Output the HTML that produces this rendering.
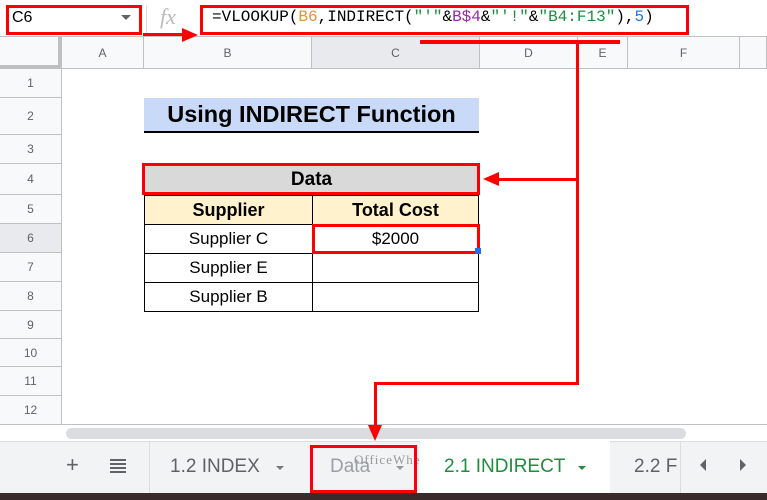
<!DOCTYPE html>
<html><head><style>
*{margin:0;padding:0;box-sizing:border-box}
body{width:767px;height:500px;overflow:hidden;background:#fff;font-family:"Liberation Sans",Arial,sans-serif;position:relative}
.a{position:absolute}
.hdr{background:#f8f9fa;color:#5f6368;font-size:12px;display:flex;align-items:center;justify-content:center;border-right:1px solid #c0c0c0;border-bottom:1px solid #c0c0c0}
.cell{position:absolute;display:flex;align-items:center;justify-content:center;font-size:17px;color:#000;border:1px solid #000}
.red{position:absolute;border:3px solid #f00}
.rl{position:absolute;background:#f00}
</style></head><body>
<div class="a" style="left:0;top:0;width:767px;height:37px;background:#fff;border-bottom:1px solid #c0c0c0"></div>
<div class="a" style="left:12px;top:9px;font-size:16px">C6</div>
<div class="a" style="left:121px;top:15px;width:0;height:0;border-left:5px solid transparent;border-right:5px solid transparent;border-top:5px solid #5f6368"></div>
<div class="a" style="left:146px;top:5px;width:1px;height:28px;background:#ddd"></div>
<div class="a" style="left:160px;top:4px;font-family:'Liberation Serif',serif;font-style:italic;font-size:22px;color:#bbb">fx</div>
<div class="a" style="left:212px;top:8px;font-family:'Liberation Mono',monospace;font-size:16px;letter-spacing:0px;color:#000;white-space:pre">=VLOOKUP(<span style="color:#e69138">B6</span>,INDIRECT(<span style="color:#1e8e3e">"'"</span>&amp;<span style="color:#9c27b0">B$4</span>&amp;<span style="color:#1e8e3e">"'!"</span>&amp;<span style="color:#1e8e3e">"B4:F13"</span>),<span style="color:#1a73e8">5</span>)</div>
<div class="red" style="left:6px;top:5px;width:136px;height:30px"></div>
<div class="red" style="left:200px;top:5px;width:489px;height:30px"></div>
<div class="hdr a" style="left:0;top:37px;width:62px;height:32px;border-right:4px solid #c0c0c0;border-bottom:4px solid #c0c0c0"></div>
<div class="hdr a" style="left:62px;top:37px;width:82px;height:32px">A</div>
<div class="hdr a" style="left:144px;top:37px;width:168px;height:32px">B</div>
<div class="hdr a" style="left:312px;top:37px;width:168px;height:32px;background:#e8eaed">C</div>
<div class="hdr a" style="left:480px;top:37px;width:98px;height:32px">D</div>
<div class="hdr a" style="left:578px;top:37px;width:50px;height:32px">E</div>
<div class="hdr a" style="left:628px;top:37px;width:112px;height:32px">F</div>
<div class="hdr a" style="left:740px;top:37px;width:27px;height:32px"></div>
<div class="hdr a" style="left:0;top:69px;width:62px;height:29px">1</div>
<div class="hdr a" style="left:0;top:98px;width:62px;height:37px">2</div>
<div class="hdr a" style="left:0;top:135px;width:62px;height:29px">3</div>
<div class="hdr a" style="left:0;top:164px;width:62px;height:31px">4</div>
<div class="hdr a" style="left:0;top:195px;width:62px;height:29px">5</div>
<div class="hdr a" style="left:0;top:224px;width:62px;height:29px;background:#e8eaed">6</div>
<div class="hdr a" style="left:0;top:253px;width:62px;height:29px">7</div>
<div class="hdr a" style="left:0;top:282px;width:62px;height:29px">8</div>
<div class="hdr a" style="left:0;top:311px;width:62px;height:28px">9</div>
<div class="hdr a" style="left:0;top:339px;width:62px;height:28px">10</div>
<div class="hdr a" style="left:0;top:367px;width:62px;height:29px">11</div>
<div class="hdr a" style="left:0;top:396px;width:62px;height:29px">12</div>
<div class="a" style="left:62px;top:424px;width:705px;height:1px;background:#c0c0c0"></div>
<div class="a" style="left:144px;top:98px;width:335px;height:35px;background:#c9daf8;border-bottom:2px solid #000;display:flex;align-items:center;justify-content:center;font-weight:bold;font-size:23.5px">Using INDIRECT Function</div>
<div class="cell" style="left:144px;top:164px;width:335px;height:32px;background:#d9d9d9;font-weight:bold;font-size:19px">Data</div>
<div class="cell" style="left:144px;top:195px;width:169px;height:30px;background:#fff2cc;font-weight:bold;font-size:18px">Supplier</div>
<div class="cell" style="left:312px;top:195px;width:167px;height:30px;background:#fff2cc;font-weight:bold;font-size:18px">Total Cost</div>
<div class="cell" style="left:144px;top:224px;width:169px;height:30px">Supplier C</div>
<div class="cell" style="left:312px;top:224px;width:167px;height:30px">$2000</div>
<div class="cell" style="left:144px;top:253px;width:169px;height:30px">Supplier E</div>
<div class="cell" style="left:312px;top:253px;width:167px;height:30px"></div>
<div class="cell" style="left:144px;top:282px;width:169px;height:30px">Supplier B</div>
<div class="cell" style="left:312px;top:282px;width:167px;height:30px"></div>
<div class="red" style="left:142px;top:163px;width:338px;height:32px"></div>
<div class="red" style="left:312px;top:224px;width:168px;height:30px"></div>
<div class="a" style="left:475px;top:248px;width:6px;height:6px;background:#1a73e8"></div>
<div class="a" style="left:62px;top:425px;width:705px;height:16px;background:#fff"></div>
<div class="a" style="left:66px;top:428px;width:620px;height:11px;border-radius:6px;background:#dadce0"></div>
<div class="a" style="left:0;top:441px;width:767px;height:52px;background:#f1f3f4;border-top:1px solid #ddd"></div>
<div class="a" style="left:66px;top:452px;font-size:22px;color:#5f6368">+</div>
<div class="a" style="left:110px;top:459px;width:16px;height:14px;background:repeating-linear-gradient(#5f6368 0 2px,transparent 2px 4px)"></div>
<div class="a" style="left:149px;top:441px;width:1px;height:52px;background:#ddd"></div>
<div class="a" style="left:170px;top:456px;font-size:19px;color:#5f6368">1.2 INDEX</div>
<div class="a" style="left:276px;top:466px;border-left:4px solid transparent;border-right:4px solid transparent;border-top:4px solid #777"></div>
<div class="a" style="left:330px;top:456px;font-size:19px;color:#9aa0a6">Data</div>
<div class="a" style="left:354px;top:452px;font-size:13px;color:#999;font-family:'Liberation Serif',serif;letter-spacing:1px">OfficeWheel</div>
<div class="a" style="left:396px;top:466px;border-left:4px solid transparent;border-right:4px solid transparent;border-top:4px solid #999"></div>
<div class="a" style="left:420px;top:441px;width:190px;height:52px;background:#fff"></div>
<div class="a" style="left:444px;top:456px;font-size:19px;color:#1e8e3e">2.1 INDIRECT</div>
<div class="a" style="left:578px;top:466px;border-left:4px solid transparent;border-right:4px solid transparent;border-top:4px solid #1e8e3e"></div>
<div class="a" style="left:634px;top:456px;font-size:19px;color:#5f6368">2.2 F</div>
<div class="a" style="left:680px;top:441px;width:1px;height:52px;background:#ddd"></div>
<div class="a" style="left:700px;top:459px;border-top:6px solid transparent;border-bottom:6px solid transparent;border-right:6px solid #5f6368"></div>
<div class="a" style="left:740px;top:459px;border-top:6px solid transparent;border-bottom:6px solid transparent;border-left:6px solid #5f6368"></div>
<div class="a" style="left:0;top:493px;width:767px;height:7px;background:#3a2a2a"></div>
<div class="red" style="left:310px;top:445px;width:107px;height:48px"></div>
<div class="rl" style="left:143px;top:33px;width:40px;height:3px"></div>
<div class="a" style="left:182px;top:28px;border-top:7px solid transparent;border-bottom:7px solid transparent;border-left:16px solid #f00"></div>
<div class="rl" style="left:420px;top:40px;width:200px;height:4px"></div>
<div class="rl" style="left:576px;top:40px;width:3px;height:345px"></div>
<div class="rl" style="left:492px;top:178px;width:86px;height:3px"></div>
<div class="a" style="left:483px;top:172px;border-top:7px solid transparent;border-bottom:7px solid transparent;border-right:16px solid #f00"></div>
<div class="rl" style="left:374px;top:382px;width:205px;height:3px"></div>
<div class="rl" style="left:374px;top:382px;width:3px;height:45px"></div>
<div class="a" style="left:368px;top:425px;border-left:7px solid transparent;border-right:7px solid transparent;border-top:16px solid #f00"></div>
</body></html>
